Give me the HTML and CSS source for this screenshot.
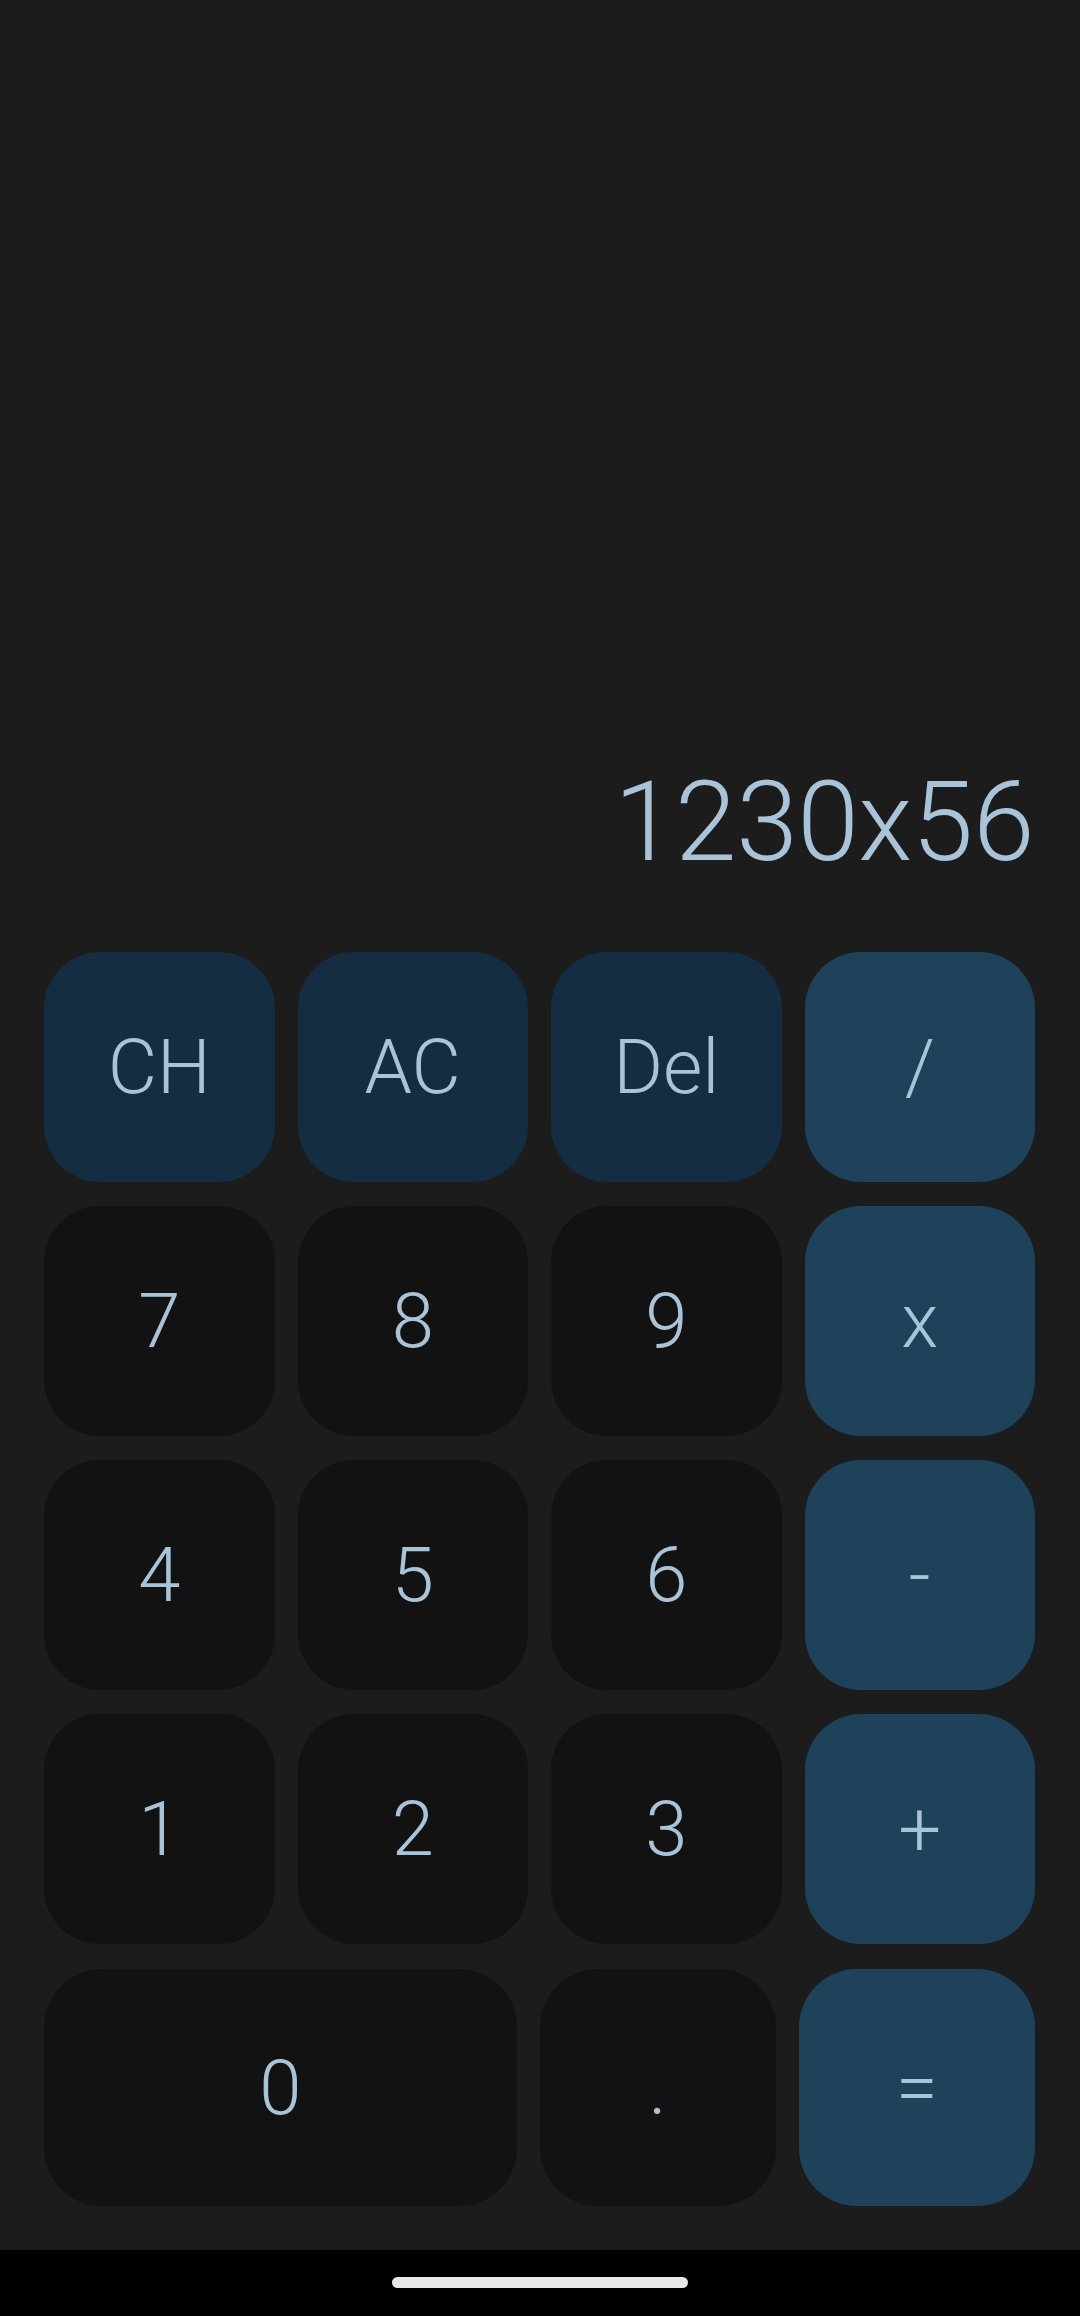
FILE: index.html
```html
<!DOCTYPE html>
<html lang="en">
<head>
<meta charset="utf-8">
<title>Calculator</title>
<link rel="stylesheet" href="styles.css">
</head>
<body>
<div class="app">
  <div class="display">
    <div class="expr">1230x56</div>
  </div>
  <div class="keypad">
    <button class="key fn">CH</button>
    <button class="key fn">AC</button>
    <button class="key fn">Del</button>
    <button class="key op">/</button>
    <button class="key num">7</button>
    <button class="key num">8</button>
    <button class="key num">9</button>
    <button class="key op">x</button>
    <button class="key num">4</button>
    <button class="key num">5</button>
    <button class="key num">6</button>
    <button class="key op">-</button>
    <button class="key num">1</button>
    <button class="key num">2</button>
    <button class="key num">3</button>
    <button class="key op">+</button>
  </div>
  <div class="lastrow">
    <button class="key num big">0</button>
    <button class="key num big">.</button>
    <button class="key op big">=</button>
  </div>
  <div class="navbar"><div class="pill"></div></div>
</div>
</body>
</html>
```
FILE: styles.css
```css
html, body {
  margin: 0;
  padding: 0;
  background: #1c1c1c;
}
.app {
  width: 1080px;
  height: 2316px;
  display: flex;
  flex-direction: column;
  font-family: Roboto, "Noto Sans", sans-serif;
  color: #a9c3d8;
}
.display {
  flex: 1;
  display: flex;
  align-items: flex-end;
  justify-content: flex-end;
  padding: 0 46px 64px 44px;
}
.expr {
  font-size: 111px;
  font-weight: 300;
  line-height: 132px;
  letter-spacing: -0.5px;
}
.keypad {
  display: grid;
  grid-template-columns: repeat(4, 1fr);
  grid-auto-rows: 230px;
  column-gap: 23px;
  row-gap: 24px;
  padding: 0 45px 0 44px;
}
.lastrow {
  display: grid;
  grid-template-columns: 2fr 1fr 1fr;
  gap: 23px;
  height: 237px;
  padding: 25px 45px 44px 44px;
}
.key {
  border: none;
  margin: 0;
  padding: 0;
  border-radius: 56px;
  font-family: Roboto, "Noto Sans", sans-serif;
  font-weight: 300;
  font-size: 76px;
  color: #a9c3d8;
  display: flex;
  align-items: center;
  justify-content: center;
  line-height: 1;
}
.key.big {
  border-radius: 58px;
}
.num { background: #121212; }
.fn { background: #152d42; }
.op { background: #1e4259; }
.navbar {
  height: 66px;
  background: #000;
  display: flex;
  justify-content: center;
  padding-top: 27px;
  box-sizing: border-box;
}
.pill {
  width: 296px;
  height: 11px;
  border-radius: 6px;
  background: #e8e8e8;
}
```
